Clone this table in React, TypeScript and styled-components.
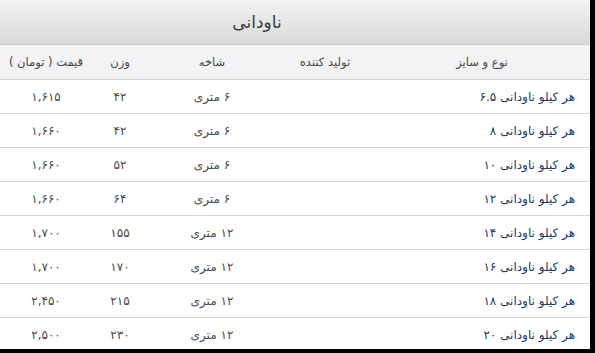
import React from "react";
import styled, { createGlobalStyle } from "styled-components";

const Global = createGlobalStyle`
  html, body { margin: 0; padding: 0; background: #000; }
  body { width: 595px; height: 353px; overflow: hidden; }
`;

const Frame = styled.div`
  width: 590px;
  height: 349px;
  background: #fff;
  overflow: hidden;
  font-family: "DejaVu Sans", sans-serif;
  direction: rtl;
`;

const TitleBar = styled.div`
  height: 45px;
  display: flex;
  align-items: center;
  justify-content: center;
  padding-right: 76px;
  box-sizing: border-box;
  background: linear-gradient(#f3f3f3, #d9d9db);
  border-bottom: 1px solid #cfcfd2;
  color: #3c3c3c;
  font-size: 17px;
`;

const Table = styled.table`
  width: 590px;
  border-collapse: collapse;
  table-layout: fixed;
  direction: rtl;
`;

const HeadCell = styled.th<{ $w: number }>`
  width: ${(p) => p.$w}px;
  height: 34px;
  padding: 0;
  background: #f3f3f5;
  border-bottom: 1px solid #d2d2d2;
  font-weight: normal;
  font-size: 11.5px;
  color: #444;
  text-align: center;
`;

const Row = styled.tr`
  height: 34px;
  border-bottom: 1px solid #d4d4d4;
`;

const Cell = styled.td<{ $name?: boolean }>`
  padding: 0 ${(p) => (p.$name ? "15px" : "0")} 0 0;
  font-size: 12px;
  color: ${(p) => (p.$name ? "#1c3966" : "#4a4a4a")};
  text-align: ${(p) => (p.$name ? "right" : "center")};
  white-space: nowrap;
`;

const cols = [
  { label: "نوع و سایز", w: 216 },
  { label: "تولید کننده", w: 98 },
  { label: "شاخه", w: 128 },
  { label: "وزن", w: 56 },
  { label: "قیمت ( تومان )", w: 92 },
];

const rows = [
  ["هر کیلو ناودانی ۶.۵", "۶ متری", "۴۲", "۱,۶۱۵"],
  ["هر کیلو ناودانی ۸", "۶ متری", "۴۲", "۱,۶۶۰"],
  ["هر کیلو ناودانی ۱۰", "۶ متری", "۵۲", "۱,۶۶۰"],
  ["هر کیلو ناودانی ۱۲", "۶ متری", "۶۴", "۱,۶۶۰"],
  ["هر کیلو ناودانی ۱۴", "۱۲ متری", "۱۵۵", "۱,۷۰۰"],
  ["هر کیلو ناودانی ۱۶", "۱۲ متری", "۱۷۰", "۱,۷۰۰"],
  ["هر کیلو ناودانی ۱۸", "۱۲ متری", "۲۱۵", "۲,۴۵۰"],
  ["هر کیلو ناودانی ۲۰", "۱۲ متری", "۲۳۰", "۲,۵۰۰"],
];

export default function App() {
  return (
    <>
      <Global />
      <Frame>
        <TitleBar>ناودانی</TitleBar>
        <Table>
          <thead>
            <tr>
              {cols.map((c) => (
                <HeadCell key={c.label} $w={c.w}>
                  {c.label}
                </HeadCell>
              ))}
            </tr>
          </thead>
          <tbody>
            {rows.map((r) => (
              <Row key={r[0]}>
                <Cell $name>{r[0]}</Cell>
                <Cell />
                <Cell>{r[1]}</Cell>
                <Cell>{r[2]}</Cell>
                <Cell>{r[3]}</Cell>
              </Row>
            ))}
          </tbody>
        </Table>
      </Frame>
    </>
  );
}
